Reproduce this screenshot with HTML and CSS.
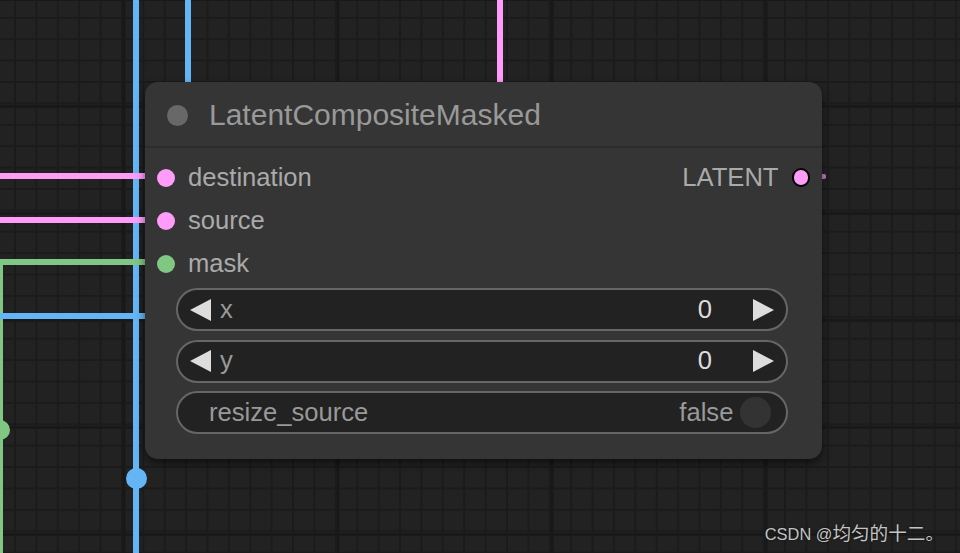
FILE: index.html
```html
<!DOCTYPE html>
<html lang="en">
<head>
<meta charset="utf-8">
<title>LatentCompositeMasked</title>
<link rel="stylesheet" href="styles.css">
</head>
<body>
<div class="canvas">
  <div class="wire wire-blue-v1"></div>
  <div class="wire wire-blue-v2"></div>
  <div class="wire wire-pink-v"></div>
  <div class="wire wire-green-v"></div>
  <div class="wire wire-pink-h1"></div>
  <div class="wire wire-pink-h2"></div>
  <div class="wire wire-green-h"></div>
  <div class="wire wire-blue-h"></div>
  <div class="wire wire-out-stub"></div>
  <div class="reroute reroute-blue"></div>
  <div class="reroute reroute-green"></div>

  <div class="node">
    <div class="node-title">
      <span class="title-dot"></span>
      <span class="title-text">LatentCompositeMasked</span>
    </div>
    <div class="slots">
      <div class="slot-row">
        <div class="slot slot-in"><span class="dot dot-latent"></span><span class="slot-label">destination</span></div>
        <div class="slot slot-out"><span class="slot-label">LATENT</span><span class="dot dot-latent dot-out"></span></div>
      </div>
      <div class="slot-row">
        <div class="slot slot-in"><span class="dot dot-latent"></span><span class="slot-label">source</span></div>
      </div>
      <div class="slot-row">
        <div class="slot slot-in"><span class="dot dot-mask"></span><span class="slot-label">mask</span></div>
      </div>
    </div>
    <div class="widgets">
      <div class="widget widget-number">
        <span class="arrow arrow-left"></span>
        <span class="w-label">x</span>
        <span class="w-value">0</span>
        <span class="arrow arrow-right"></span>
      </div>
      <div class="widget widget-number">
        <span class="arrow arrow-left"></span>
        <span class="w-label">y</span>
        <span class="w-value">0</span>
        <span class="arrow arrow-right"></span>
      </div>
      <div class="widget widget-toggle">
        <span class="w-label">resize_source</span>
        <span class="w-value w-value-off">false</span>
        <span class="knob"></span>
      </div>
    </div>
  </div>

  <div class="watermark">CSDN @<span class="cjk">均匀的十二。</span></div>
</div>
</body>
</html>
```

FILE: styles.css
```css
* { box-sizing: border-box; }

html, body {
  margin: 0;
  padding: 0;
  width: 960px;
  height: 553px;
  overflow: hidden;
  background: #222222;
  font-family: "Liberation Sans", Arial, sans-serif;
}

.canvas {
  position: relative;
  width: 960px;
  height: 553px;
  overflow: hidden;
  background-color: #222222;
  background-image:
    linear-gradient(90deg, #181818 3px, transparent 3px),
    linear-gradient(0deg, #191919 3px, transparent 3px),
    linear-gradient(90deg, #1b1b1b 2px, transparent 2px),
    linear-gradient(0deg, #1b1b1b 2px, transparent 2px);
  background-size:
    214px 100%,
    100% 107px,
    21.4px 21.4px,
    21.4px 21.4px;
  background-position:
    122.5px 0,
    0 -106px,
    14px 0,
    0 -2.6px;
}

/* wires */
.wire { position: absolute; }
.wire-blue-v1 { left: 133px; top: 0; width: 6px; height: 553px; background: #64b5f6; }
.wire-blue-v2 { left: 185px; top: 0; width: 6px; height: 90px; background: #64b5f6; }
.wire-pink-v { left: 497px; top: 0; width: 6px; height: 90px; background: #ff9cf9; }
.wire-green-v { left: -3px; top: 259px; width: 6px; height: 300px; background: #81c784; }
.wire-pink-h1 { left: 0; top: 173px; width: 150px; height: 6px; background: #ff9cf9; }
.wire-pink-h2 { left: 0; top: 217px; width: 150px; height: 6px; background: #ff9cf9; }
.wire-green-h { left: 0; top: 259px; width: 150px; height: 6px; background: #81c784; }
.wire-blue-h { left: 0; top: 313px; width: 150px; height: 6px; background: #64b5f6; }
.wire-out-stub { left: 818px; top: 174px; width: 8px; height: 5px; background: #c77cc2; border-radius: 2px; }

.reroute { position: absolute; border-radius: 50%; }
.reroute-blue { left: 125.5px; top: 467.5px; width: 21px; height: 21px; background: #64b5f6; }
.reroute-green { left: -10px; top: 420px; width: 20px; height: 20px; background: #81c784; }

/* node */
.node {
  position: absolute;
  left: 145px;
  top: 82px;
  width: 677px;
  background: #353535;
  border-radius: 13px;
  box-shadow: 0 4px 8px rgba(0, 0, 0, 0.55);
  padding-bottom: 25px;
}

.node-title {
  height: 66px;
  display: flex;
  align-items: center;
  padding-left: 21.5px;
  padding-top: 2px;
  border-bottom: 2px solid #2c2c2c;
}

.title-dot {
  width: 21px;
  height: 21px;
  border-radius: 50%;
  background: #686868;
  flex: none;
}

.title-text {
  margin-left: 21.5px;
  font-size: 30px;
  color: #999999;
  line-height: 1;
}

.slots {
  padding-top: 8px;
  display: flex;
  flex-direction: column;
}

.slot-row {
  height: 43px;
  display: flex;
  align-items: center;
  justify-content: space-between;
  padding: 0 12px;
}

.slot {
  display: flex;
  align-items: center;
}

.slot-label {
  font-size: 25.6px;
  color: #aaaaaa;
  line-height: 1;
}

.slot-in .slot-label { margin-left: 13px; }
.slot-out .slot-label { margin-right: 13px; }

.dot {
  width: 18px;
  height: 18px;
  border-radius: 50%;
  flex: none;
}

.dot-latent { background: #ff9cf9; }
.dot-mask { background: #81c784; }
.dot-out { border: 2px solid #000000; width: 18.5px; height: 18.5px; }

.widgets {
  margin-top: 3px;
  padding: 0 34px 0 31px;
  display: flex;
  flex-direction: column;
  gap: 8.5px;
}

.widget {
  height: 43px;
  border: 2px solid #666666;
  border-radius: 22px;
  background: #222222;
  display: flex;
  align-items: center;
  font-size: 25.6px;
  line-height: 1;
}

.widget-number { padding: 0 12px; }

.arrow {
  width: 0;
  height: 0;
  flex: none;
  border-top: 11px solid transparent;
  border-bottom: 11px solid transparent;
}

.arrow-left { border-right: 21px solid #dddddd; }
.arrow-right { border-left: 21px solid #dddddd; }

.w-label { color: #999999; }
.widget-number .w-label { margin-left: 9px; }

.w-value {
  margin-left: auto;
  color: #dddddd;
}

.widget-number .w-value { margin-right: 41px; }

.widget-toggle { padding: 0 15px 0 31px; }

.w-value-off { color: #999999; margin-right: 7px; }

.knob {
  width: 30.6px;
  height: 30.6px;
  border-radius: 50%;
  background: #333333;
  flex: none;
}

/* watermark overlay */
.watermark {
  position: absolute;
  right: 16px;
  top: 522px;
  font-size: 16.4px;
  color: #c4c4c4;
  text-shadow: 0 0 2px rgba(0, 0, 0, 0.6);
  white-space: nowrap;
  line-height: 20px;
}

.cjk {
  font-family: "Noto Sans CJK SC", sans-serif;
  font-size: 18.6px;
}
```
